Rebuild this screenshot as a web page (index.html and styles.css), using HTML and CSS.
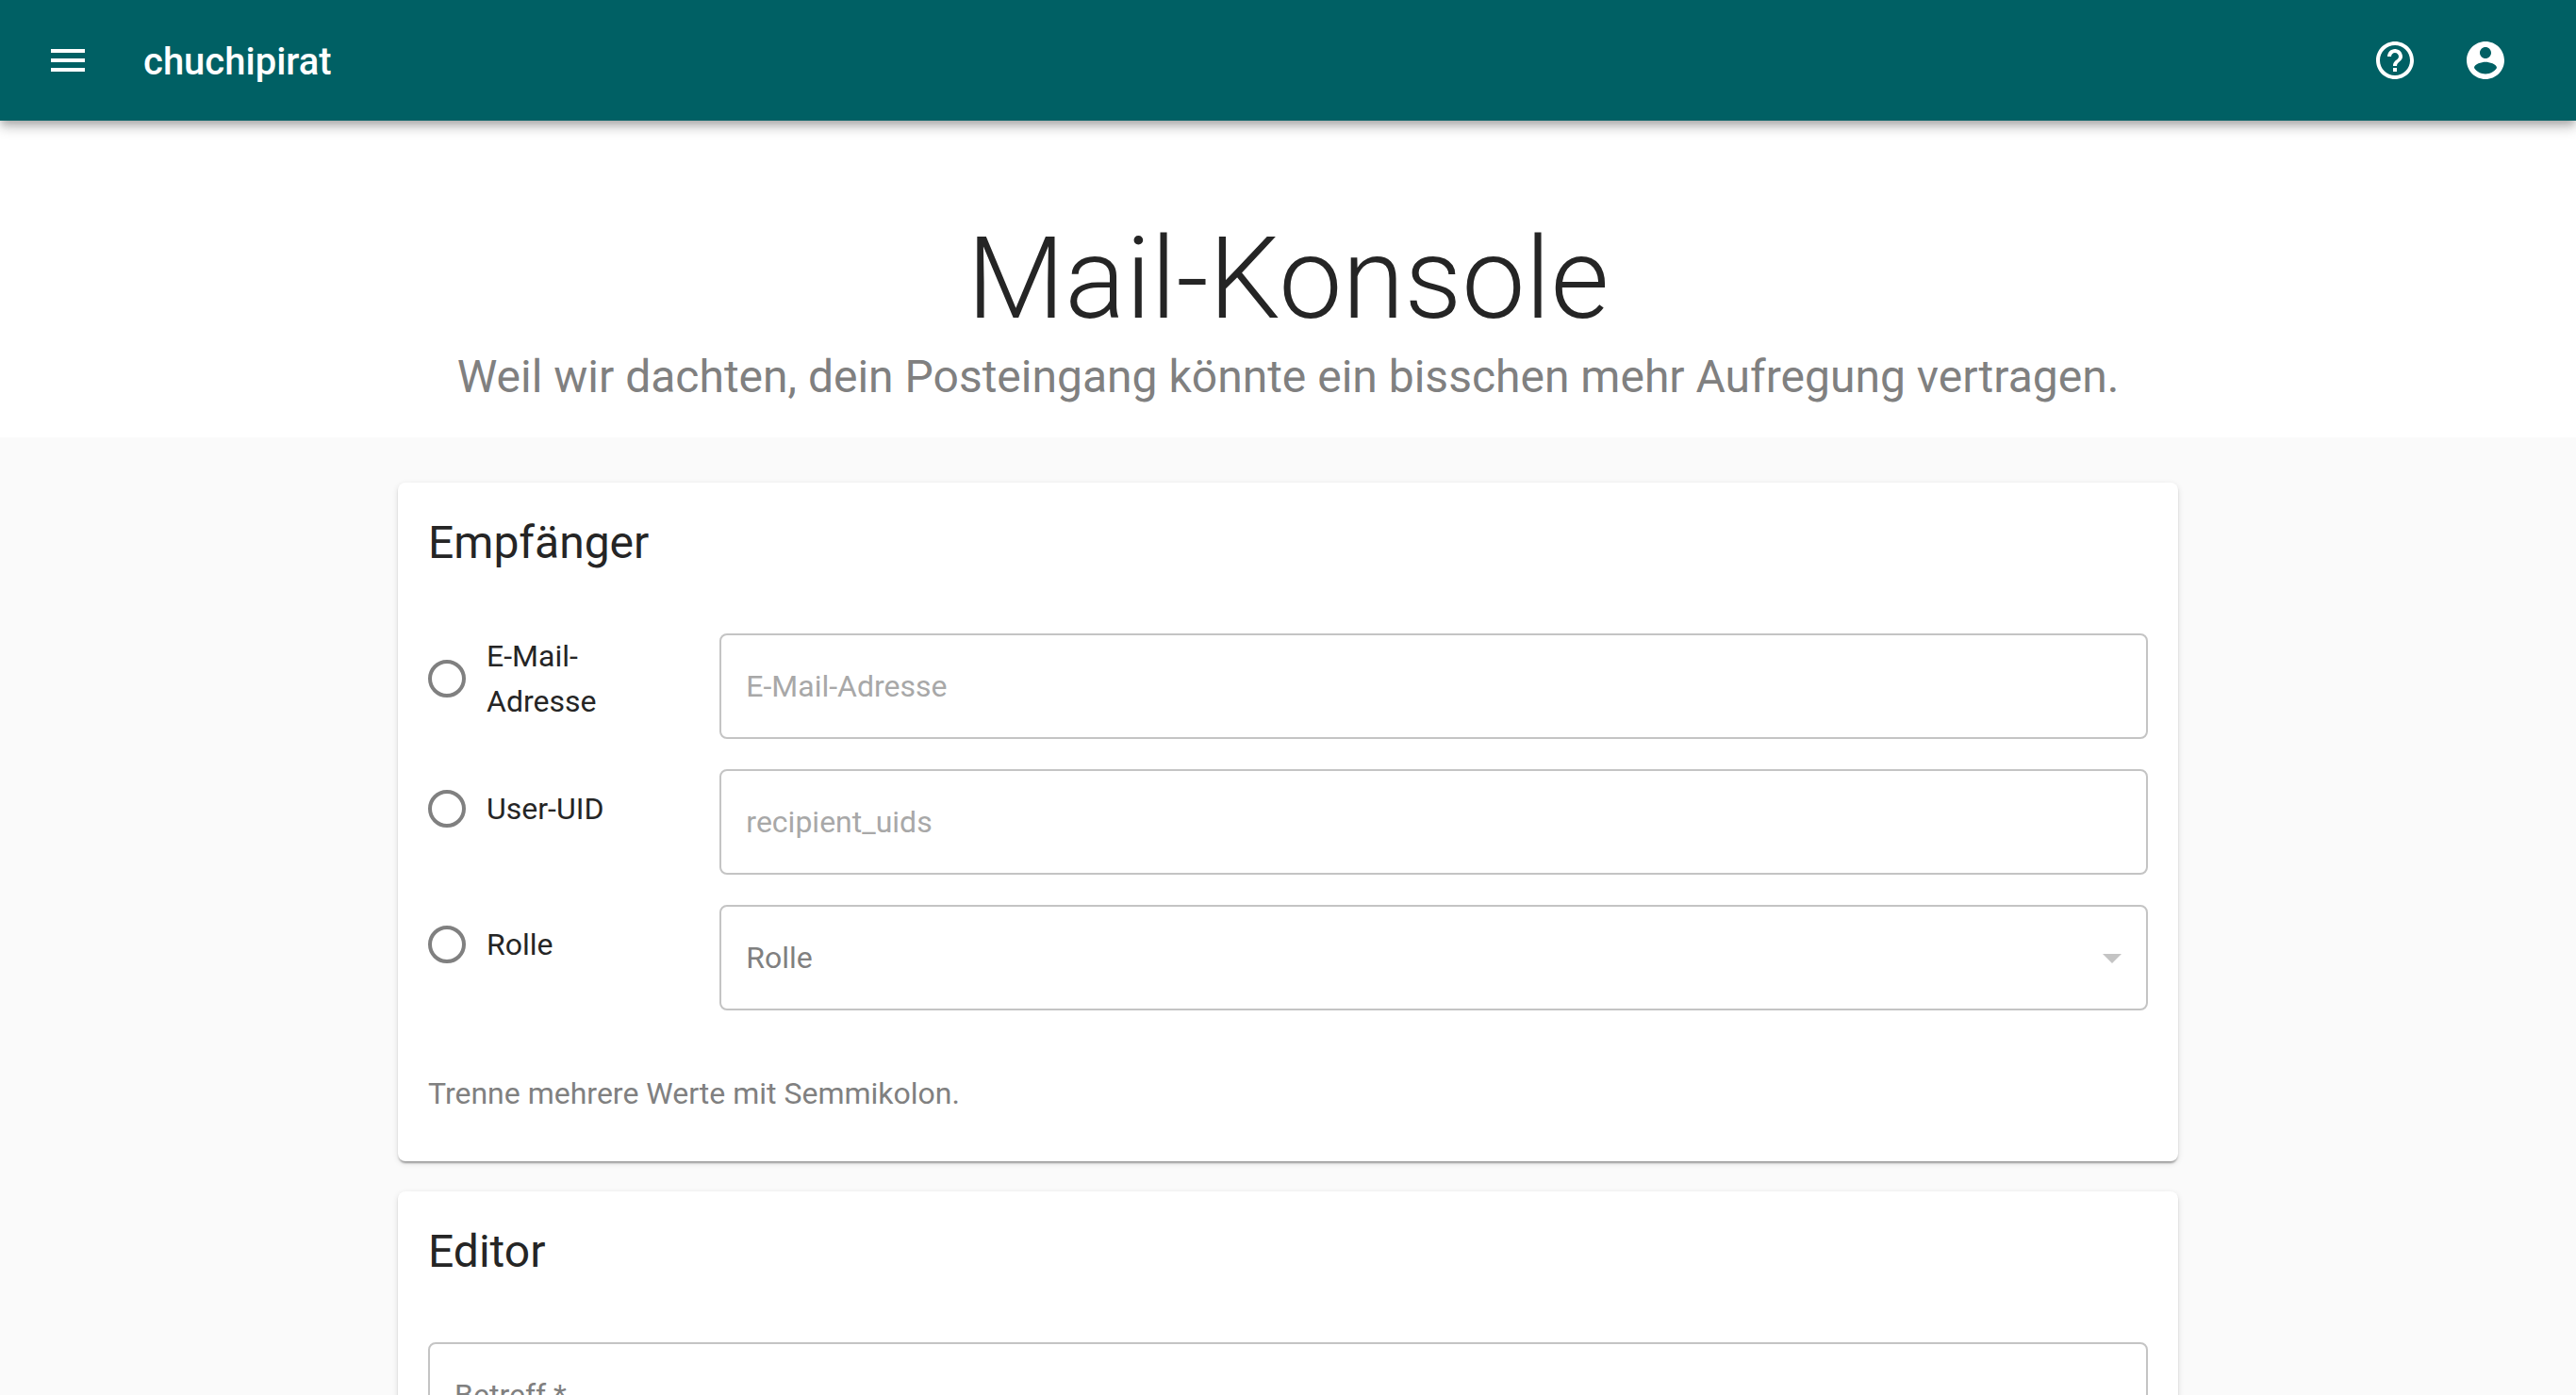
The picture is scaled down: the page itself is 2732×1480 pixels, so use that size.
FILE: index.html
```html
<!DOCTYPE html>
<html lang="de">
<head>
  <meta charset="utf-8">
  <meta name="viewport" content="width=device-width, initial-scale=1">
  <title>Mail-Konsole – chuchipirat</title>
  <link rel="stylesheet" href="styles.css">
</head>
<body>
  <header class="app-bar">
    <button class="icon-button" type="button" aria-label="Menü">
      <svg class="icon" viewBox="0 0 24 24" aria-hidden="true"><path d="M3 18h18v-2H3v2zm0-5h18v-2H3v2zm0-7v2h18V6H3z"/></svg>
    </button>
    <a class="brand" href="#">chuchipirat</a>
    <button class="icon-button" type="button" aria-label="Hilfe">
      <svg class="icon" viewBox="0 0 24 24" aria-hidden="true"><path d="M11 18h2v-2h-2v2zm1-16C6.48 2 2 6.48 2 12s4.48 10 10 10 10-4.48 10-10S17.52 2 12 2zm0 18c-4.41 0-8-3.59-8-8s3.59-8 8-8 8 3.59 8 8-3.59 8-8 8zm0-14c-2.21 0-4 1.79-4 4h2c0-1.1.9-2 2-2s2 .9 2 2c0 2-3 1.75-3 5h2c0-2.25 3-2.5 3-5 0-2.21-1.79-4-4-4z"/></svg>
    </button>
    <button class="icon-button" type="button" aria-label="Konto">
      <svg class="icon" viewBox="0 0 24 24" aria-hidden="true"><path d="M12 2C6.48 2 2 6.48 2 12s4.48 10 10 10 10-4.48 10-10S17.52 2 12 2zm0 3c1.66 0 3 1.34 3 3s-1.34 3-3 3-3-1.34-3-3 1.34-3 3-3zm0 14.2c-2.5 0-4.71-1.28-6-3.22.03-1.99 4-3.08 6-3.08 1.99 0 5.97 1.09 6 3.08-1.29 1.94-3.5 3.22-6 3.22z"/></svg>
    </button>
  </header>

  <main class="page">
    <section class="hero">
      <h1 class="hero-title">Mail-Konsole</h1>
      <p class="hero-subtitle">Weil wir dachten, dein Posteingang könnte ein bisschen mehr Aufregung vertragen.</p>
    </section>

    <form class="content">
      <section class="card">
        <h2 class="card-title">Empfänger</h2>
        <div class="recipients">
          <label class="choice"><input class="radio" type="radio" name="recipient" value="email"><span class="choice-text">E-Mail-Adresse</span></label>
          <input class="field recipient-field" type="text" placeholder="E-Mail-Adresse" aria-label="E-Mail-Adresse">
          <label class="choice"><input class="radio" type="radio" name="recipient" value="uid"><span class="choice-text">User-UID</span></label>
          <input class="field recipient-field" type="text" placeholder="recipient_uids" aria-label="User-UID">
          <label class="choice"><input class="radio" type="radio" name="recipient" value="role"><span class="choice-text">Rolle</span></label>
          <div class="select-wrap recipient-field">
            <select class="field select" aria-label="Rolle"><option>Rolle</option></select>
            <svg class="icon select-arrow" viewBox="0 0 24 24" aria-hidden="true"><path d="M7 10l5 5 5-5z"/></svg>
          </div>
        </div>
        <p class="hint">Trenne mehrere Werte mit Semmikolon.</p>
      </section>

      <section class="card">
        <h2 class="card-title">Editor</h2>
        <input class="field subject" type="text" placeholder="Betreff *" aria-label="Betreff" required>
      </section>
    </form>
  </main>
</body>
</html>
```
FILE: styles.css
```css
:root {
  --primary: #006064;
  --text: #252525;
  --text-secondary: #808080;
  --text-disabled: #a8a8a8;
  --outline: #c4c4c4;
}

* {
  box-sizing: border-box;
}

body {
  display: flex;
  flex-direction: column;
  height: 100vh;
  margin: 0;
  background: #fafafa;
  color: var(--text);
  font-family: Roboto, "Liberation Sans", sans-serif;
  font-size: 32px;
  line-height: 48px;
}

h1,
h2,
p {
  margin: 0;
  font-weight: 400;
}

/* App bar */
.app-bar {
  position: relative;
  z-index: 1;
  display: flex;
  flex: none;
  align-items: center;
  height: 128px;
  padding: 0 48px 0 24px;
  background: var(--primary);
  color: #fff;
  box-shadow: 0 4px 8px -2px rgba(0, 0, 0, 0.2), 0 8px 10px 0 rgba(0, 0, 0, 0.14), 0 2px 20px 0 rgba(0, 0, 0, 0.12);
}

.icon-button {
  display: flex;
  padding: 24px;
  border: 0;
  border-radius: 50%;
  background: none;
  color: inherit;
}

.icon {
  width: 48px;
  height: 48px;
  fill: currentColor;
}

.brand {
  flex: 1;
  padding: 4px 0 0 32px;
  color: inherit;
  font-size: 40px;
  font-weight: 500;
  line-height: 64px;
  text-decoration: none;
}

/* Page */
.page {
  flex: 1;
  min-height: 0;
  overflow-y: auto;
  scrollbar-width: none;
}

.hero {
  padding: 96px 32px 32px;
  background: #fff;
  text-align: center;
}

.hero-title {
  font-size: 120px;
  font-weight: 300;
  line-height: 144px;
}

.hero-subtitle {
  color: var(--text-secondary);
  font-size: 48px;
  line-height: 64px;
}

.content {
  display: grid;
  gap: 32px;
  max-width: 1888px;
  margin: 0 auto;
  padding: 48px 0;
}

/* Cards */
.card {
  padding: 32px 32px 48px;
  border-radius: 8px;
  background: #fff;
  box-shadow: 0 4px 2px -2px rgba(0, 0, 0, 0.2), 0 2px 2px 0 rgba(0, 0, 0, 0.14), 0 2px 6px 0 rgba(0, 0, 0, 0.12);
}

.card-title {
  margin-bottom: 64px;
  font-size: 48px;
  line-height: 64px;
}

.recipients {
  display: grid;
  grid-template-columns: repeat(12, 1fr);
  gap: 32px;
  align-items: start;
}

.choice {
  display: flex;
  grid-column: span 2;
  align-items: center;
  min-height: 84px;
  padding-right: 32px;
}

.radio {
  flex: none;
  width: 40px;
  height: 40px;
  margin: 0 22px 0 0;
  border: 4px solid var(--text-secondary);
  border-radius: 50%;
  appearance: none;
}

.radio:checked {
  background: radial-gradient(var(--primary) 10px, transparent 11px);
}

.recipient-field {
  grid-column: span 10;
}

.field {
  width: 100%;
  height: 112px;
  padding: 0 26px;
  border: 2px solid var(--outline);
  border-radius: 8px;
  background: none;
  color: inherit;
  font: inherit;
}

.field::placeholder {
  color: var(--text-disabled);
  opacity: 1;
}

.subject::placeholder {
  color: var(--text-secondary);
}

.select-wrap {
  display: grid;
  align-items: center;
}

.select,
.select-arrow {
  grid-area: 1 / 1;
}

.select {
  color: var(--text-secondary);
  appearance: none;
}

.select-arrow {
  justify-self: end;
  margin-right: 14px;
  color: var(--outline);
  pointer-events: none;
}

.hint {
  margin-top: 64px;
  color: var(--text-secondary);
}
```
